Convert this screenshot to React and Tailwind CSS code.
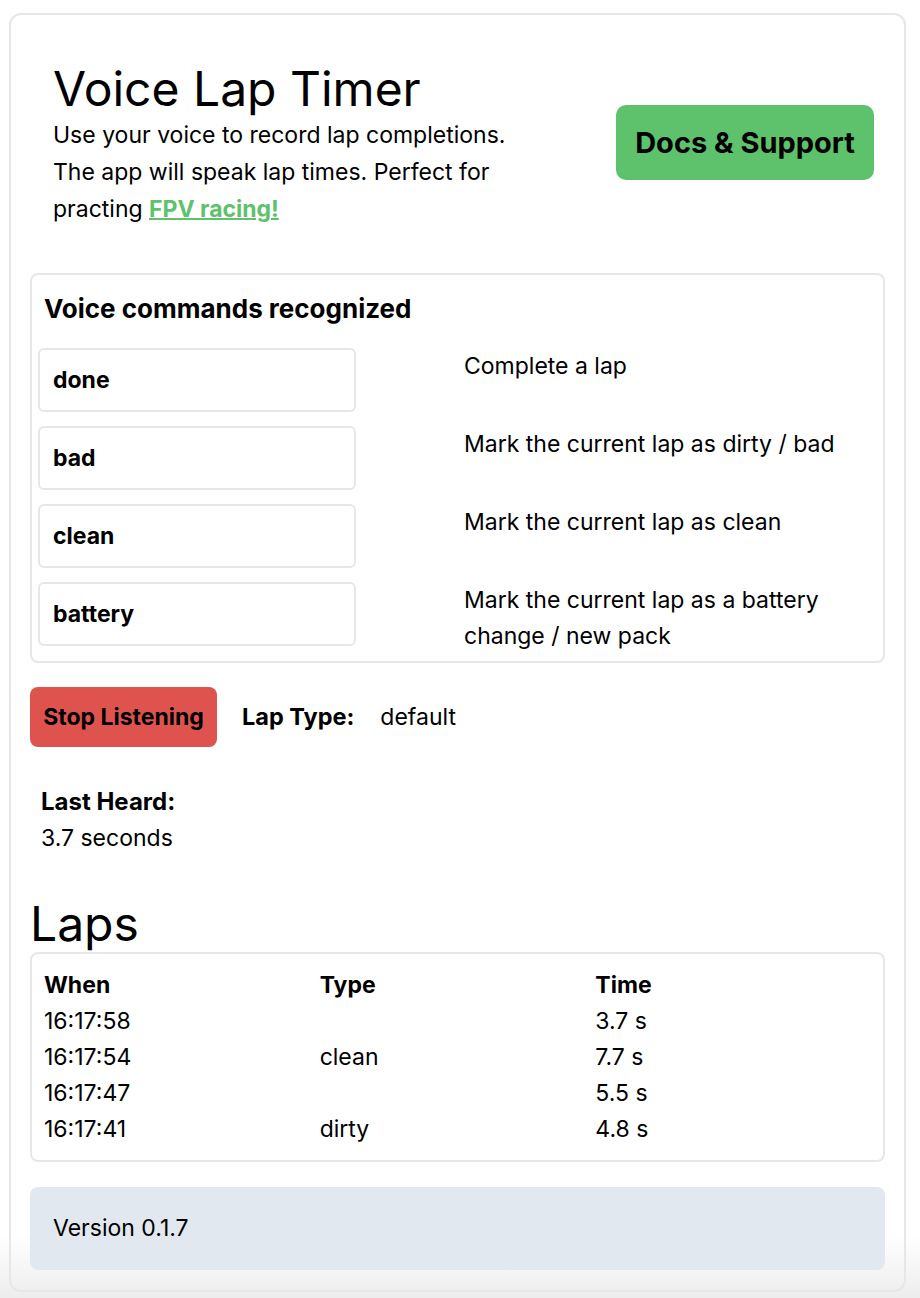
export default function App() {
  const commands = [
    ["done", "Complete a lap"],
    ["bad", "Mark the current lap as dirty / bad"],
    ["clean", "Mark the current lap as clean"],
    ["battery", "Mark the current lap as a battery change / new pack"],
  ];
  const laps = [
    ["16:17:58", "", "3.7 s"],
    ["16:17:54", "clean", "7.7 s"],
    ["16:17:47", "", "5.5 s"],
    ["16:17:41", "dirty", "4.8 s"],
  ];
  return (
    <div className="min-h-[1298px] bg-[linear-gradient(to_bottom,#ffffff_1235px,#ededed_1298px)] pt-[13px] pl-[9px] pr-[14px] font-['Inter',sans-serif] text-black">
      <div className="rounded-xl border-2 border-[#e5e7eb] px-[19px] pb-[20px]">
        {/* Header */}
        <div className="flex items-center justify-between pl-[23px] pr-[11px] pt-[46px]">
          <div>
            <h1 className="text-[48px] leading-[56px] font-normal">Voice Lap Timer</h1>
            <p className="text-[23px] leading-[37px] w-[470px]">
              Use your voice to record lap completions. The app will speak lap times. Perfect for practing{" "}
              <a href="#" className="font-bold text-[#5ec16c] underline decoration-2">FPV racing!</a>
            </p>
          </div>
          <a href="#" className="mb-[4px] flex h-[75px] w-[258px] items-center justify-center rounded-[10px] bg-[#5ec16c] text-[29px] font-bold">
            Docs &amp; Support
          </a>
        </div>

        {/* Voice commands */}
        <div className="mt-[45px] rounded-lg border-2 border-[#e5e7eb] px-[6px] pt-[18px] pb-[7px]">
          <h2 className="pl-[6px] text-[26px] leading-[32px] font-bold mb-[23px]">Voice commands recognized</h2>
          <div className="grid grid-cols-[318px_1fr] gap-x-[108px] gap-y-[14px]">
            {commands.map(([cmd, desc]) => (
              <div key={cmd} className="contents">
                <div className="flex h-[64px] items-center rounded-md border-2 border-[#e5e7eb] pl-[13px] text-[23px] font-bold">
                  {cmd}
                </div>
                <div className="text-[23px] leading-[36px] pr-[30px]">{desc}</div>
              </div>
            ))}
          </div>
        </div>

        {/* Controls */}
        <div className="mt-[24px] flex items-center">
          <button className="h-[60px] w-[187px] rounded-lg bg-[#df534f] text-[23px] font-bold">Stop Listening</button>
          <span className="ml-[25px] text-[23.5px] font-bold">Lap Type:</span>
          <span className="ml-[26px] text-[23px]">default</span>
        </div>

        <div className="mt-[37px] pl-[11px] leading-[36px]">
          <div className="font-bold text-[24px]">Last Heard:</div>
          <div className="text-[23px]">3.7 seconds</div>
        </div>

        <h2 className="mt-[40px] text-[48px] leading-[56px] font-normal">Laps</h2>

        <div className="rounded-lg border-2 border-[#e5e7eb] px-3 pt-[13px] pb-[13px]">
          <div className="grid grid-cols-3 text-[23px] leading-[36px]">
            <div className="font-bold">When</div>
            <div className="font-bold">Type</div>
            <div className="font-bold">Time</div>
            {laps.map(([w, t, tm]) => (
              <div key={w} className="contents">
                <div>{w}</div>
                <div>{t}</div>
                <div>{tm}</div>
              </div>
            ))}
          </div>
        </div>

        <div className="mt-[25px] flex h-[83px] items-center rounded-lg bg-[#e2e8f0] pl-[23px] text-[23px]">
          Version 0.1.7
        </div>
      </div>
    </div>
  );
}
